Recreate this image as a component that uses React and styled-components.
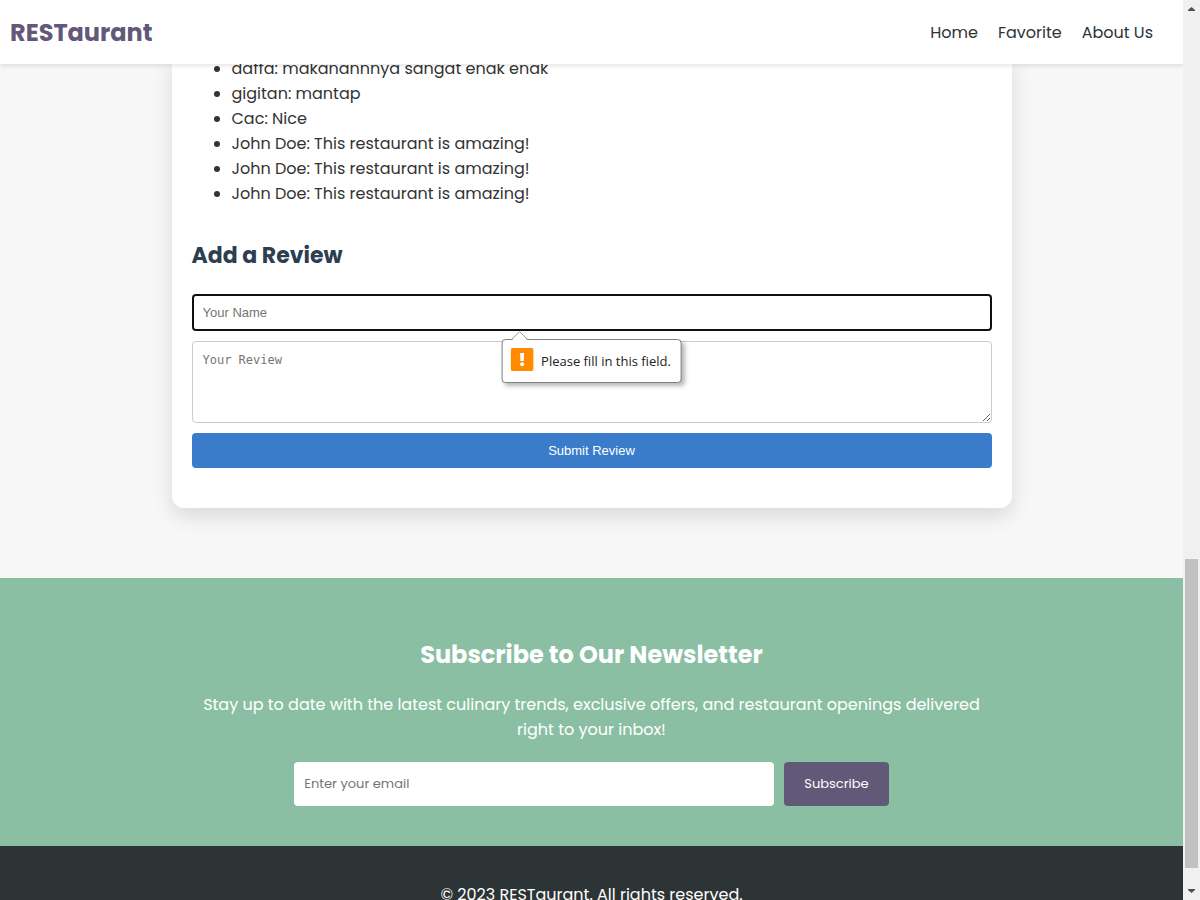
import React from "react";
import styled, { createGlobalStyle } from "styled-components";

const GlobalStyle = createGlobalStyle`
  * { box-sizing: border-box; }
  body {
    margin: 0;
    color: #333;
    background: #f7f7f7;
    font: 16px/25px Poppins, Inter, sans-serif;
  }
`;

const Shell = styled.div`
  display: flex;
  height: 100vh;
  overflow: hidden;
`;

const Page = styled.div`
  flex: 1;
  min-width: 0;
  overflow: hidden;
`;

const Header = styled.header`
  position: relative;
  z-index: 2;
  display: flex;
  align-items: center;
  justify-content: space-between;
  height: 64px;
  padding: 0 30px 0 10px;
  background: #fff;
  box-shadow: 0 2px 4px rgba(0, 0, 0, 0.1);
`;

const Brand = styled.a`
  color: #635879;
  font-size: 24px;
  font-weight: 700;
  text-decoration: none;
`;

const Nav = styled.nav`
  display: flex;
  gap: 20px;
`;

const NavLink = styled.a`
  color: #2d3436;
  text-decoration: none;
`;

const Main = styled.main`
  margin-top: -8px;
  padding: 0 20px 70px;
`;

const Card = styled.article`
  max-width: 840px;
  margin: 0 auto;
  padding: 0 20px 40px;
  background: #fff;
  border-radius: 0 0 12px 12px;
  box-shadow: 0 8px 20px rgba(0, 0, 0, 0.12);
`;

const Reviews = styled.ul`
  margin: 0;
  padding-left: 40px;
`;

const FormTitle = styled.h3`
  margin: 32px 0 20px;
  color: #2c3e50;
  font-size: 22px;
  line-height: 36px;
`;

const ReviewForm = styled.form`
  display: flex;
  flex-direction: column;
  gap: 10px;
`;

const Field = styled.div`
  position: relative;
  display: flex;
`;

const NameInput = styled.input`
  flex: 1;
  min-width: 0;
  height: 37px;
  padding: 0 9px;
  border: 2px solid #101010;
  border-radius: 4px;
  outline: none;
  font: 13px "Liberation Sans", Arial, sans-serif;
  &::placeholder { color: #757575; }
`;

const ReviewInput = styled.textarea`
  flex: 1;
  min-width: 0;
  height: 82px;
  padding: 10px;
  border: 1px solid #ccc;
  border-radius: 4px;
  font: 12px/16px "DejaVu Sans Mono", monospace;
  &::placeholder { color: #757575; }
`;

const SubmitButton = styled.button`
  height: 35px;
  border: 0;
  border-radius: 4px;
  color: #fff;
  background: #3a7bca;
  font: 13px "Liberation Sans", Arial, sans-serif;
`;

const Bubble = styled.div`
  position: absolute;
  z-index: 1;
  top: 45px;
  left: 50%;
  display: flex;
  gap: 8px;
  height: 44px;
  padding: 8px 10px 8px 8px;
  transform: translateX(-50%);
  white-space: nowrap;
  color: #222;
  background: #fff;
  border: 1px solid #808080;
  border-radius: 4px;
  box-shadow: 3px 3px 4px rgba(0, 0, 0, 0.28);
  font: 13px/26px "Open Sans", sans-serif;
`;

const BubbleArrow = styled.svg`
  position: absolute;
  top: -9px;
  left: 8px;
`;

const Newsletter = styled.section`
  display: flex;
  flex-direction: column;
  align-items: center;
  padding: 57px 20px 40px;
  color: #fff;
  background: #8abfa3;
  text-align: center;
`;

const NewsletterTitle = styled.h2`
  margin: 0 0 17px;
  font-size: 24px;
  line-height: 40px;
`;

const NewsletterText = styled.p`
  max-width: 800px;
  margin: 0 0 20px;
`;

const NewsletterForm = styled.form`
  display: flex;
  justify-content: center;
  gap: 10px;
  width: 100%;
`;

const EmailInput = styled.input`
  flex: 0 1 480px;
  min-width: 0;
  height: 44px;
  padding: 0 10px;
  border: 0;
  border-radius: 4px;
  font: 13px Poppins, Inter, sans-serif;
  &::placeholder { color: #757575; }
`;

const SubscribeButton = styled.button`
  padding: 0 20px;
  border: 0;
  border-radius: 4px;
  color: #fff;
  background: #625878;
  font: 13px Poppins, Inter, sans-serif;
`;

const Footer = styled.footer`
  padding: 36px 20px;
  color: #fff;
  background: #2d3436;
  text-align: center;
`;

const Scrollbar = styled.div`
  display: flex;
  flex-direction: column;
  width: 17px;
  background: #f0f0f0;
`;

const ScrollArrow = styled.svg`
  flex: none;
  width: 17px;
  height: 17px;
`;

const Track = styled.div`
  flex: ${(p) => p.$share} 0 0;
`;

const Thumb = styled(Track)`
  margin: 0 2px;
  background: #c1c1c1;
`;

const reviews = [
  "daffa: makanannnya sangat enak enak",
  "gigitan: mantap",
  "Cac: Nice",
  "John Doe: This restaurant is amazing!",
  "John Doe: This restaurant is amazing!",
  "John Doe: This restaurant is amazing!",
];

export default function App() {
  return (
    <Shell>
      <GlobalStyle />
      <Page>
        <Header>
          <Brand href="#">RESTaurant</Brand>
          <Nav>
            <NavLink href="#">Home</NavLink>
            <NavLink href="#">Favorite</NavLink>
            <NavLink href="#">About Us</NavLink>
          </Nav>
        </Header>
        <Main>
          <Card>
            <Reviews>
              {reviews.map((text, i) => (
                <li key={i}>{text}</li>
              ))}
            </Reviews>
            <FormTitle>Add a Review</FormTitle>
            <ReviewForm noValidate>
              <Field>
                <NameInput type="text" aria-label="Your Name" placeholder="Your Name" required />
                <Bubble role="alert">
                  <BubbleArrow width="20" height="10" viewBox="0 0 20 10" aria-hidden="true">
                    <path d="M1 9.5 9 1l8 8.5V10H1z" fill="#fff" />
                    <path d="M1 8.5 9 .7l8 7.8" fill="none" stroke="#999" />
                  </BubbleArrow>
                  <svg width="23" height="23" viewBox="0 0 23 23" aria-hidden="true">
                    <rect width="23" height="23" rx="2" fill="#ff8c00" />
                    <path d="M9.500 5h4l-.3 8h-3.400z" fill="#fff" />
                    <circle cx="11.500" cy="16.200" r="2" fill="#fff" />
                  </svg>
                  Please fill in this field.
                </Bubble>
              </Field>
              <Field>
                <ReviewInput aria-label="Your Review" placeholder="Your Review" required />
              </Field>
              <SubmitButton type="submit">Submit Review</SubmitButton>
            </ReviewForm>
          </Card>
        </Main>
        <Newsletter>
          <NewsletterTitle>Subscribe to Our Newsletter</NewsletterTitle>
          <NewsletterText>
            Stay up to date with the latest culinary trends, exclusive offers, and restaurant
            openings delivered right to your inbox!
          </NewsletterText>
          <NewsletterForm>
            <EmailInput type="email" aria-label="Enter your email" placeholder="Enter your email" />
            <SubscribeButton type="submit">Subscribe</SubscribeButton>
          </NewsletterForm>
        </Newsletter>
        <Footer>© 2023 RESTaurant. All rights reserved.</Footer>
      </Page>
      <Scrollbar aria-hidden="true">
        <ScrollArrow viewBox="0 0 17 17">
          <path d="M5 11h7v-1L8.500 7 5 10z" fill="#505050" />
        </ScrollArrow>
        <Track $share={542} />
        <Thumb $share={309} />
        <Track $share={15} />
        <ScrollArrow viewBox="0 0 17 17">
          <path d="M5 6h7v1l-3.500 3L5 7z" fill="#505050" />
        </ScrollArrow>
      </Scrollbar>
    </Shell>
  );
}
